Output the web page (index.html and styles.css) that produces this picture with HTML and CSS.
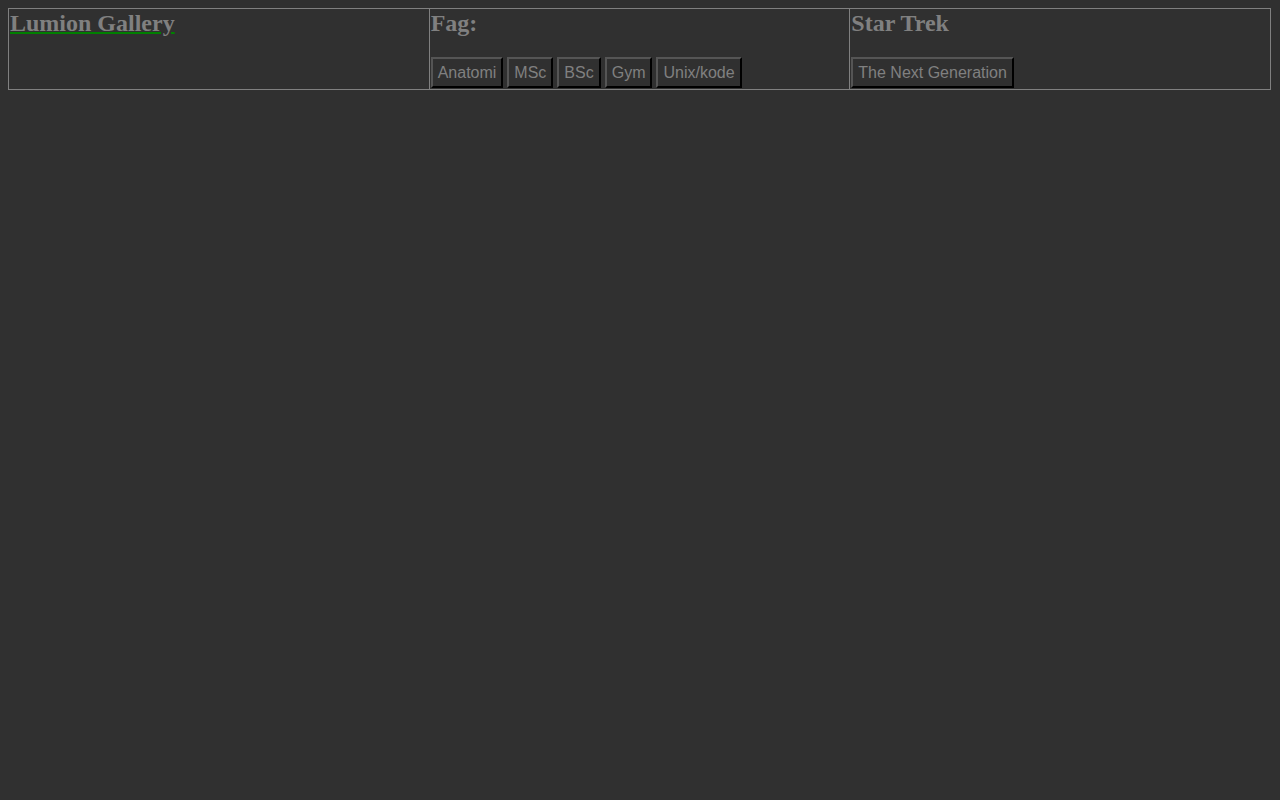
FILE: index.html
```html
<!DOCTYPE html>
<html lang="no">
<head>
  <meta charset="UTF-8">
  <title>Lumion Gallery</title>
  <link rel="stylesheet" href="styles.css">
</head>
<body>
  <table class="topbar">
    <tr>
      <td>
        <h2><a href="index.html">Lumion Gallery</a></h2>
      </td>
      <td>
        <h2>Fag:</h2>
        <button class="cat-btn">Anatomi</button>
        <button class="cat-btn">MSc</button>
        <button class="cat-btn">BSc</button>
        <button class="cat-btn">Gym</button>
        <button class="cat-btn">Unix/kode</button>
      </td>
      <td>
        <h2>Star Trek</h2>
        <button class="cat-btn">The Next Generation</button>
      </td>
    </tr>
  </table>
</body>
</html>
```

FILE: styles.css
```css
body {
  margin: 8px;
  background-color: #303030;
  color: #808080;
  font-family: "Liberation Serif", serif;
}
.topbar {
  width: calc(100% - 1px);
  border-collapse: collapse;
  border: 1px solid #808080;
  table-layout: fixed;
}
.topbar td {
  border: 1px solid #808080;
  padding: 1px;
  vertical-align: top;
}
h2 {
  font-size: 24px;
  font-weight: bold;
  margin: 0 0 20px 0;
}
h2 a {
  color: #808080;
  text-decoration: underline;
  text-decoration-color: #008000;
  text-decoration-thickness: 2px;
}
.cat-btn {
  font-family: "Liberation Sans", Arial, sans-serif;
  font-size: 16px;
  line-height: 17px;
  color: #808080;
  background-color: #303030;
  padding: 5px 5px;
  margin: 0;
  border-width: 2px;
  border-style: solid;
  border-color: #555 #000 #000 #555;
  cursor: pointer;
}
```
